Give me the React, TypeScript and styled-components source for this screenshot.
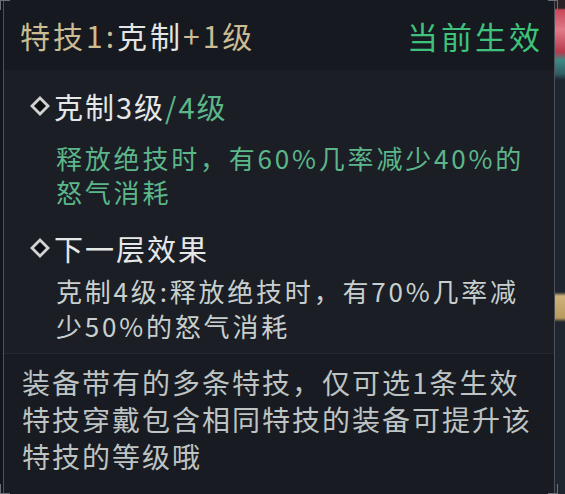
import React from 'react';
import styled, { createGlobalStyle } from 'styled-components';

const GlobalStyle = createGlobalStyle`
  html, body {
    margin: 0;
    height: 100%;
    background: #11141a;
    overflow: hidden;
  }
  #root {
    height: 100%;
  }
`;

const Page = styled.div`
  display: flex;
  height: 494px;
  font-family: 'Noto Sans CJK SC', 'Noto Sans', sans-serif;
`;

const Panel = styled.div`
  position: relative;
  flex: 1;
  display: flex;
  flex-direction: column;
  margin-left: 3px;
  border-left: 1px solid #4d5259;
  border-right: 1px solid #4d5259;
  background: #1b1e25;
`;

const Corner = styled.span<{ $v: 'top' | 'bottom'; $h: 'left' | 'right' }>`
  position: absolute;
  ${({ $v }) => $v}: 0;
  ${({ $h }) => $h}: -4px;
  width: 9px;
  height: 9px;
  border-${({ $v }) => $v}: 1px solid #6a6f76;
  border-${({ $h }) => $h}: 1px solid #6a6f76;
`;

const Header = styled.div`
  display: flex;
  align-items: center;
  justify-content: space-between;
  height: 70px;
  padding: 0 11px 0 16px;
  background: #16191f;
  font-size: 30px;
  letter-spacing: 3px;
`;

const Status = styled.span`
  color: #3ec27c;
  font-size: 31px;
`;

const Tone = styled.span<{ $c: string }>`
  color: ${({ $c }) => $c};
`;

const Body = styled.div`
  display: flex;
  flex-direction: column;
  gap: 19px;
  padding: 16px 12px 10px 26px;
  border-bottom: 1px solid #25282f;
`;

const Group = styled.div`
  display: flex;
  flex-direction: column;
`;

const GroupTitle = styled.div`
  display: flex;
  align-items: center;
  gap: 4px;
  height: 40px;
  font-size: 29px;
  letter-spacing: 2px;
  color: #e6e8e8;
`;

const Desc = styled.div<{ $c: string; $top: number }>`
  display: flex;
  flex-direction: column;
  margin: ${({ $top }) => $top}px 0 0 26px;
  font-size: 26px;
  letter-spacing: 2.8px;
  color: ${({ $c }) => $c};
  white-space: nowrap;
`;

const Line = styled.div<{ $h: number }>`
  height: ${({ $h }) => $h}px;
  line-height: ${({ $h }) => $h}px;
`;

const Footer = styled.div`
  flex: 1;
  display: flex;
  flex-direction: column;
  padding: 10px 12px 0 18px;
  background: #181b21;
  font-size: 28px;
  letter-spacing: 2px;
  color: #bec3c3;
  white-space: nowrap;
`;

const SideStrip = styled.div`
  width: 10px;
  background: linear-gradient(
    to bottom,
    #2a2224 0px,
    #2a2224 8px,
    #c8485a 10px,
    #e07a88 30px,
    #b83a4c 52px,
    #3d8a86 60px,
    #2f5d63 74px,
    #1e252e 80px,
    #1e252e 292px,
    #cdb27a 296px,
    #b99a5e 318px,
    #20262f 322px,
    #20262f 100%
  );
`;

const Diamond = () => (
  <svg width="20" height="20" viewBox="0 0 20 20">
    <polygon points="10,2 18,10 10,18 2,10" fill="#0c0e11" stroke="#d2d4d4" strokeWidth="2.8" strokeLinejoin="miter" />
  </svg>
);

export default function App() {
  return (
    <>
      <GlobalStyle />
      <Page>
        <Panel>
          <Corner $v="top" $h="left" />
          <Corner $v="top" $h="right" />
          <Corner $v="bottom" $h="left" />
          <Corner $v="bottom" $h="right" />
          <Header>
            <span>
              <Tone $c="#cbbc93">特技1:</Tone>
              <Tone $c="#e4e5e5">克制</Tone>
              <Tone $c="#cbbc93">+1级</Tone>
            </span>
            <Status>当前生效</Status>
          </Header>
          <Body>
            <Group>
              <GroupTitle>
                <Diamond />
                <span>
                  克制3级<Tone $c="#5cb88a">/4级</Tone>
                </span>
              </GroupTitle>
              <Desc $c="#5bb68a" $top={15}>
                <Line $h={34}>释放绝技时，有60%几率减少40%的</Line>
                <Line $h={34}>怒气消耗</Line>
              </Desc>
            </Group>
            <Group>
              <GroupTitle>
                <Diamond />
                <span>下一层效果</span>
              </GroupTitle>
              <Desc $c="#c8d0cf" $top={5}>
                <Line $h={35}>克制4级:释放绝技时，有70%几率减</Line>
                <Line $h={35}>少50%的怒气消耗</Line>
              </Desc>
            </Group>
          </Body>
          <Footer>
            <Line $h={37}>装备带有的多条特技，仅可选1条生效</Line>
            <Line $h={37}>特技穿戴包含相同特技的装备可提升该</Line>
            <Line $h={37}>特技的等级哦</Line>
          </Footer>
        </Panel>
        <SideStrip />
      </Page>
    </>
  );
}
